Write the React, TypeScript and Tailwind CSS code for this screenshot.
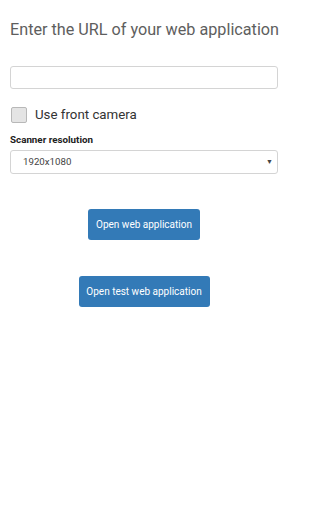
import React from "react";

export default function App() {
  return (
    <div className="w-[288px] h-[512px] bg-white px-[10px] font-['Roboto',sans-serif]">
      <div className="pt-[19px] text-[16.2px] leading-[22px] text-[#5e5e5e] whitespace-nowrap">
        Enter the URL of your web application
      </div>
      <div className="mt-[25px] h-[23px] rounded-[3px] border border-[#d4d4d4] bg-white" />
      <div className="mt-[18px] flex items-center gap-[8px]">
        <div className="h-[16px] w-[16px] ml-[1px] rounded-[2px] border border-[#b8b8b8] bg-[#e4e4e4]" />
        <div className="text-[13.3px] leading-[16px] text-[#333]">Use front camera</div>
      </div>
      <div className="mt-[11px] text-[9.8px] leading-[12px] font-bold text-[#222]">Scanner resolution</div>
      <div className="mt-[4px] h-[24px] rounded-[3px] border border-[#d4d4d4] bg-white flex items-center justify-between pl-[12px] pr-[4px]">
        <span className="text-[9.7px] text-[#444]">1920x1080</span>
        <span className="text-[7px] text-[#444]">▼</span>
      </div>
      <div className="mt-[35px] flex justify-center">
        <button className="h-[31px] w-[112px] rounded-[3px] bg-[#337ab7] text-white text-[10px]">
          Open web application
        </button>
      </div>
      <div className="mt-[36px] flex justify-center">
        <button className="h-[31px] w-[131px] rounded-[3px] bg-[#337ab7] text-white text-[10px]">
          Open test web application
        </button>
      </div>
    </div>
  );
}
